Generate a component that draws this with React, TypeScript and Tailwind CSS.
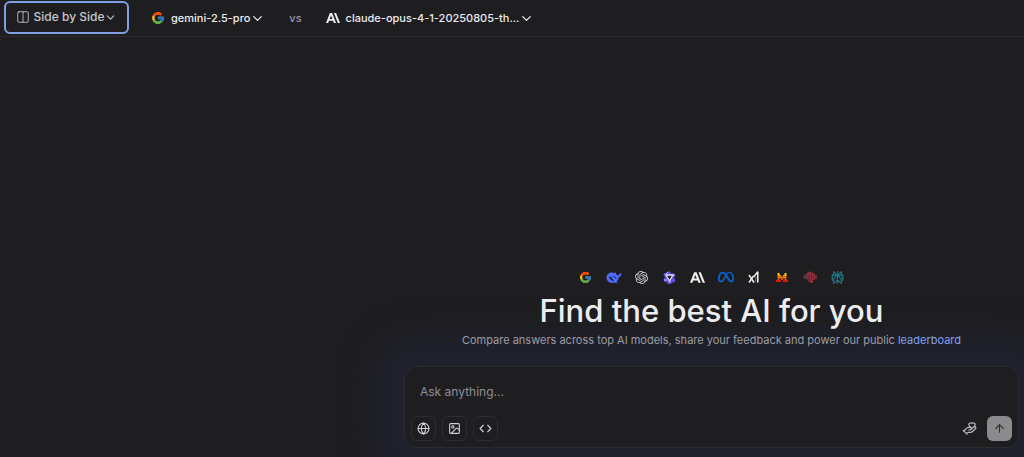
import type { ReactNode } from "react";
import { ArrowUp, ChevronDown, Code, Columns2, Globe, HandHeart, Image } from "lucide-react";
import { FcGoogle } from "react-icons/fc";
import { SiAnthropic, SiMeta, SiOpenai, SiPerplexity } from "react-icons/si";

type ModelSelectProps = {
    icon: ReactNode;
    name: string;
};

function ModelSelect({ icon, name }: ModelSelectProps) {
    return (
        <button type="button" className="flex items-center gap-1.5 text-[11px] font-medium text-[#ececf0]">
            {icon}
            <span className="flex items-center">
                {name}
                <ChevronDown size={15} />
            </span>
        </button>
    );
}

function DeepSeekLogo() {
    return (
        <svg width="16" height="13" viewBox="0 0 32 26" fill="#4d6bfe" aria-label="DeepSeek">
            <path d="M1 13C1 7 6 3 12 3c2 0 3 .6 4.500 1.400C17 3 18.500 2.800 20 4c-.4 3 2 4.600 4.500 5.500C24.500 6 27 6.500 31 4c0 5-2 8-5.500 8.500C25 17 23 20 20.500 21.500c1 1 2 1.300 3 1.800-3 1.200-5.500.7-7.500-.3C8 25 1 21 1 13z" />
            <path d="M5 12c3-1 6 1 8 4 1.200 2 2.500 3 4 3.500-4 1-6.500-1-8.500-3.500C7 13.500 6 12.500 5 12z" fill="#1e1e20" />
            <path d="M14 11.500c2.500-1.500 5 .5 6 4" fill="none" stroke="#1e1e20" strokeWidth="1.800" />
        </svg>
    );
}

function QwenLogo() {
    return (
        <svg width="13" height="13" viewBox="0 0 26 26" aria-label="Qwen">
            <path d="M9 1h5l2 4h7l2 4-3 4 3 6-3 4h-5l-2 3h-5l-3-4H3l-2-5 3-4-3-6 2-3h4z" fill="#6150e6" />
            <path d="M6 8h14l-7 12z" fill="#1e1e20" stroke="#e4e1ff" strokeWidth="2.600" />
            <path d="M9 2l-3 6M23 9l-3-1M13 20l3 4M2 18h6" fill="none" stroke="#b9b2ff" strokeWidth="2" />
        </svg>
    );
}

function XaiLogo() {
    return (
        <svg width="11" height="12" viewBox="0 0 22 24" fill="none" stroke="#f0f0f2" strokeWidth="3" aria-label="xAI">
            <path d="M2 8l10 15M11 10L2 23" />
            <path d="M11 12L20 1" />
            <path d="M19.500 2V23" />
            <path d="M15.500 9V23" stroke="#8a8a8d" strokeWidth="1.500" />
        </svg>
    );
}

function MistralLogo() {
    return (
        <svg width="12" height="9" viewBox="0 0 24 18" aria-label="Mistral">
            <path d="M3 0h4v4H3zM17 0h4v4h-4z" fill="#ffd000" />
            <path d="M3 4h7v3H3zM14 4h7v3h-7z" fill="#ffaa00" />
            <path d="M3 7h18v4H3z" fill="#ff7700" />
            <path d="M3 11h4v3H3zM10 11h4v3h-4zM17 11h4v3h-4z" fill="#f04b12" />
            <path d="M0 14h10v4H0zM14 14h10v4H14z" fill="#dc1608" />
        </svg>
    );
}

function WaveLogo() {
    return (
        <svg width="14" height="12" viewBox="0 0 28 24" fill="none" stroke="#99353f" strokeWidth="2.600" strokeLinecap="round" aria-label="MiniMax">
            <path d="M2 10v3M5 8v7" stroke="#7f305c" />
            <path d="M8.500 6v10M12 3v18M15.500 2v20M19 4v17M22.500 6v11M26 9v6" />
            <path d="M8.500 6c0-2 3.500-2 3.500 0M15.500 21c0 2 3.500 2 3.500 0" />
        </svg>
    );
}

const LOGOS: { name: string; icon: ReactNode }[] = [
    { name: "google", icon: <FcGoogle size={13} /> },
    { name: "deepseek", icon: <DeepSeekLogo /> },
    { name: "openai", icon: <SiOpenai size={13} color="#d4d4d8" /> },
    { name: "qwen", icon: <QwenLogo /> },
    { name: "anthropic", icon: <SiAnthropic size={15} color="#f0f0f2" /> },
    { name: "meta", icon: <SiMeta size={16} color="#0866d9" /> },
    { name: "xai", icon: <XaiLogo /> },
    { name: "mistral", icon: <MistralLogo /> },
    { name: "wave", icon: <WaveLogo /> },
    { name: "perplexity", icon: <SiPerplexity size={13} color="#218291" stroke="#218291" strokeWidth={0.8} /> },
];

const TOOLS: { label: string; icon: ReactNode }[] = [
    { label: "Search the web", icon: <Globe size={13} /> },
    { label: "Add image", icon: <Image size={13} /> },
    { label: "Write code", icon: <Code size={13} /> },
];

export default function App() {
    return (
        <div className="flex min-h-screen flex-col overflow-hidden bg-[#1e1e20] font-[Inter,sans-serif] text-[#e6e6ea]">
            {/* HEADER */}
            <header className="flex h-[37px] items-center border-b border-[#2b2b2e] pl-1">
                <button
                    type="button"
                    className="mb-0.5 flex h-[33px] w-[125px] items-center justify-center gap-1 rounded-md border-2 border-[#7f9fe4] text-[12px] font-medium text-[#c6c6ce]"
                >
                    <Columns2 size={14} strokeWidth={1.5} />
                    <span className="flex items-center">
                        Side by Side
                        <ChevronDown size={13} />
                    </span>
                </button>
                <div className="ml-[22px] flex items-center gap-6">
                    <ModelSelect icon={<FcGoogle size={14} />} name="gemini-2.5-pro" />
                    <span className="text-[11px] font-medium text-[#9a9aae]">vs</span>
                    <ModelSelect icon={<SiAnthropic size={14} />} name="claude-opus-4-1-20250805-th..." />
                </div>
            </header>

            {/* CHAT */}
            <main className="flex flex-1 flex-col justify-end pr-[5px] pb-[9px] pl-[404px]">
                <div className="relative z-10 flex flex-col items-center">
                    <div className="flex items-center gap-3">
                        {LOGOS.map((logo) => (
                            <span key={logo.name} className="flex h-4 w-4 items-center justify-center">
                                {logo.icon}
                            </span>
                        ))}
                    </div>
                    <h1 className="mt-1.5 mb-px text-[31px] leading-10 font-medium text-[#ececf0]">Find the best AI for you</h1>
                    <p className="mb-[18px] text-[11px] leading-4 text-[#9c9ca6]">
                        Compare answers across top AI models, share your feedback and power our public{" "}
                        <a href="#leaderboard" className="text-[#7fa2ee]">leaderboard</a>
                    </p>
                </div>

                <form
                    onSubmit={(e) => e.preventDefault()}
                    className="rounded-xl border border-[#2b2b2d] bg-[#1e1e20] px-1.5 pt-4 pb-1.5 shadow-[0_0_32px_30px_#20222e]"
                >
                    <input
                        type="text"
                        aria-label="Message"
                        placeholder="Ask anything..."
                        className="block h-[18px] w-full bg-transparent px-[9px] text-[12px] outline-none placeholder:text-[#8d8d98]"
                    />
                    <div className="mt-[15px] flex items-center gap-1.5">
                        {TOOLS.map((tool) => (
                            <button
                                key={tool.label}
                                type="button"
                                aria-label={tool.label}
                                className="flex h-[25px] w-[25px] items-center justify-center rounded-md border border-[#2d2d30] text-[#d0d0d6]"
                            >
                                {tool.icon}
                            </button>
                        ))}
                        <button type="button" aria-label="Support" className="mr-1 ml-auto text-[#b6b6be]">
                            <HandHeart size={15} />
                        </button>
                        <button
                            type="submit"
                            aria-label="Send"
                            className="flex h-[25px] w-[25px] items-center justify-center rounded-md bg-[#8b8b8d] text-[#303033]"
                        >
                            <ArrowUp size={13} />
                        </button>
                    </div>
                </form>
            </main>
        </div>
    );
}
